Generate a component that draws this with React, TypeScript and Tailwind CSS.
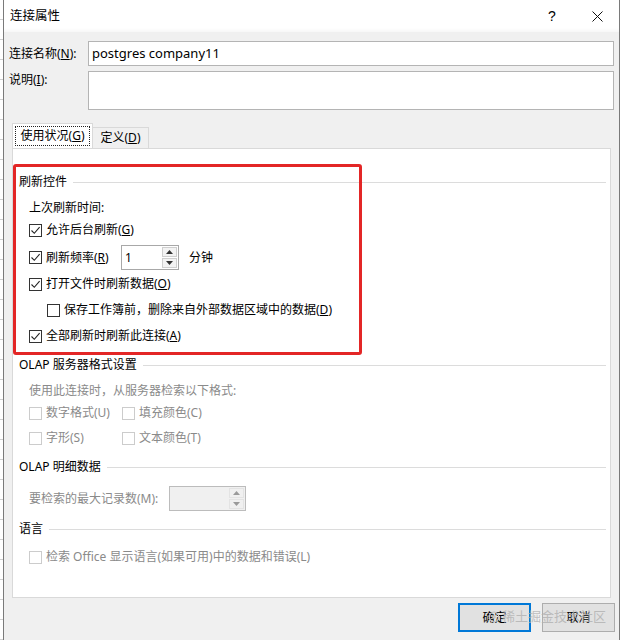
import React from "react";

const FONT = "font-['Noto_Sans','Noto_Sans_CJK_SC',sans-serif]";

function Check({ checked, disabled }: { checked?: boolean; disabled?: boolean }) {
  return (
    <div
      className={`w-[13px] h-[13px] border shrink-0 flex items-center justify-center ${
        disabled ? "border-[#cccccc] bg-white" : "border-[#333333] bg-white"
      }`}
    >
      {checked && (
        <svg width="11" height="11" viewBox="0 0 11 11">
          <path d="M1.5 5.5 L4.3 8.3 L9.6 2.2" fill="none" stroke="#222" strokeWidth="1.1" />
        </svg>
      )}
    </div>
  );
}

function CheckRow({
  children,
  checked,
  disabled,
  className = "",
}: {
  children: React.ReactNode;
  checked?: boolean;
  disabled?: boolean;
  className?: string;
}) {
  return (
    <div className={`flex items-center h-[20px] ${className}`}>
      <Check checked={checked} disabled={disabled} />
      <span className={`ml-[4px] whitespace-nowrap ${disabled ? "text-[#8a8a8a]" : "text-black"}`}>{children}</span>
    </div>
  );
}

function Header({ children, className = "" }: { children: React.ReactNode; className?: string }) {
  return (
    <div className={`flex items-center h-[20px] pl-[6px] pr-[4px] ${className}`}>
      <span className="whitespace-nowrap">{children}</span>
      <div className="flex-1 h-px bg-[#dcdcdc] ml-[6px]" />
    </div>
  );
}

function SpinArrows({ disabled }: { disabled?: boolean }) {
  const c = disabled ? "#9a9a9a" : "#333";
  return (
    <div className="flex flex-col w-[16px] h-full py-[1px] pr-[1px] gap-[1px]">
      <div className={`flex-1 flex items-center justify-center border ${disabled ? "border-[#e3e3e3] bg-[#f0f0f0]" : "border-[#cfcfcf] bg-[#f3f3f3]"}`}>
        <svg width="7" height="4" viewBox="0 0 7 4"><path d="M0 4 L3.5 0 L7 4 Z" fill={c} /></svg>
      </div>
      <div className={`flex-1 flex items-center justify-center border ${disabled ? "border-[#e3e3e3] bg-[#f0f0f0]" : "border-[#cfcfcf] bg-[#f3f3f3]"}`}>
        <svg width="7" height="4" viewBox="0 0 7 4"><path d="M0 0 L7 0 L3.5 4 Z" fill={c} /></svg>
      </div>
    </div>
  );
}

export default function App() {
  return (
    <div className={`w-[621px] h-[640px] flex bg-white text-[12px] leading-none text-black overflow-hidden ${FONT}`}>
      {/* excel grid strip */}
      <div className="w-[3px] h-full bg-[repeating-linear-gradient(to_bottom,#ffffff_0px,#ffffff_19px,#d0d0d0_19px,#d0d0d0_20px)]" />
      {/* dialog */}
      <div className="w-[617px] h-full flex flex-col border-l border-r border-[#7a7a7a] bg-[#f0f0f0] relative">
        {/* title bar */}
        <div className="h-[32px] bg-white flex items-center pl-[6px] shrink-0 bg-[linear-gradient(to_bottom,#ffffff_0px,#ffffff_28px,#f7f7f7_32px)]">
          <span className="text-[12.5px]">连接属性</span>
          <div className="flex-1" />
          <span className="text-[14px] w-[12px] mr-[34px] text-center font-['Liberation_Sans',sans-serif]">?</span>
          <svg width="11" height="11" viewBox="0 0 11 11" className="mr-[16px]">
            <path d="M0.5 0.5 L10.5 10.5 M10.5 0.5 L0.5 10.5" stroke="#111" strokeWidth="1" />
          </svg>
        </div>

        {/* body */}
        <div className="flex-1 flex flex-col px-[8px]">
          <div className="flex items-center mt-[9px] h-[25px] -ml-[3px] -mr-[3px]">
            <span className="w-[79px] whitespace-nowrap">
              连接名称(<u>N</u>):
            </span>
            <div className="flex-1 h-full bg-white border border-[#b4b4b4] flex items-center pl-[3px] text-[13px]">
              postgres company11
            </div>
          </div>
          <div className="flex mt-[5px] h-[39px] -ml-[3px] -mr-[3px]">
            <span className="w-[79px] pt-[3px] whitespace-nowrap">
              说明(<u>I</u>):
            </span>
            <div className="flex-1 h-full bg-white border border-[#b4b4b4]" />
          </div>

          {/* tabs */}
          <div className="flex items-end mt-[14px] h-[24px]">
            <div className="w-[81px] h-[25px] bg-white border border-b-0 border-[#d9d9d9] relative z-10 p-[2px]">
              <div className="w-full h-full border border-dotted border-[#222] flex items-center justify-center">
                使用状况(<u>G</u>)
              </div>
            </div>
            <div className="w-[56px] h-[21px] bg-[#f0f0f0] border border-l-0 border-b-0 border-[#d9d9d9] flex items-center justify-center">
              定义(<u>D</u>)
            </div>
          </div>

          {/* panel */}
          <div className="h-[450px] bg-white border border-[#d9d9d9] relative flex flex-col">
            <Header className="mt-[23px]">刷新控件</Header>
            <div className="flex items-center h-[20px] mt-[6px] pl-[16px]">上次刷新时间:</div>
            <CheckRow checked className="mt-[2px] ml-[16px]">
              允许后台刷新(<u>G</u>)
            </CheckRow>
            <div className="flex items-center h-[25px] mt-[5px] ml-[16px]">
              <Check checked />
              <span className="ml-[4px] w-[75px] whitespace-nowrap">
                刷新频率(<u>R</u>)
              </span>
              <div className="w-[58px] h-full bg-white border border-[#a8a8a8] flex">
                <span className="flex-1 pl-[3px] flex items-center">1</span>
                <SpinArrows />
              </div>
              <span className="ml-[10px]">分钟</span>
            </div>
            <CheckRow checked className="mt-[4px] ml-[16px]">
              打开文件时刷新数据(<u>O</u>)
            </CheckRow>
            <CheckRow className="mt-[6px] ml-[34px]">
              保存工作簿前，删除来自外部数据区域中的数据(<u>D</u>)
            </CheckRow>
            <CheckRow checked className="mt-[6px] ml-[16px]">
              全部刷新时刷新此连接(<u>A</u>)
            </CheckRow>

            <Header className="mt-[9px]">OLAP 服务器格式设置</Header>
            <div className="flex items-center h-[20px] mt-[6px] pl-[16px] text-[#8a8a8a]">
              使用此连接时，从服务器检索以下格式:
            </div>
            <div className="flex mt-[2px] ml-[16px]">
              <CheckRow disabled className="w-[93px]">数字格式(U)</CheckRow>
              <CheckRow disabled>填充颜色(C)</CheckRow>
            </div>
            <div className="flex mt-[5px] ml-[16px]">
              <CheckRow disabled className="w-[93px]">字形(S)</CheckRow>
              <CheckRow disabled>文本颜色(T)</CheckRow>
            </div>

            <Header className="mt-[9px]">OLAP 明细数据</Header>
            <div className="flex items-center h-[25px] mt-[9px] ml-[16px]">
              <span className="w-[140px] text-[#8a8a8a] whitespace-nowrap">要检索的最大记录数(M):</span>
              <div className="w-[77px] h-full bg-[#f0f0f0] border border-[#bcbcbc] flex">
                <span className="flex-1" />
                <SpinArrows disabled />
              </div>
            </div>

            <Header className="mt-[8px]">语言</Header>
            <CheckRow disabled className="mt-[8px] ml-[16px]">
              检索 Office 显示语言(如果可用)中的数据和错误(L)
            </CheckRow>

            {/* red annotation */}
            <div className="absolute left-[0px] top-[15px] w-[349px] h-[191px] border-[3px] border-[#e32626] rounded-[3px] pointer-events-none" />
          </div>

          {/* buttons */}
          <div className="flex justify-end mt-[5px] gap-[11px] -mr-[4px]">
            <div className="w-[73px] h-[29px] border-2 border-[#0078d7] bg-[#e1e1e1] flex items-center justify-center">确定</div>
            <div className="w-[73px] h-[29px] border border-[#adadad] bg-[#e1e1e1] flex items-center justify-center">取消</div>
          </div>
        </div>

        {/* watermark */}
        <div className="absolute left-[484px] top-[610px] flex items-center gap-[2px] text-[13px] whitespace-nowrap text-[#b0b0b0]/80 pointer-events-none">
          <svg width="12" height="12" viewBox="0 0 12 12">
            <circle cx="6" cy="6" r="4.8" fill="none" stroke="#c4c4c4" strokeWidth="1.3" />
            <circle cx="6" cy="6" r="1.8" fill="#c4c4c4" />
          </svg>
          <span>稀土掘金技术社区</span>
        </div>
      </div>
      <div className="w-px h-full bg-white" />
    </div>
  );
}
